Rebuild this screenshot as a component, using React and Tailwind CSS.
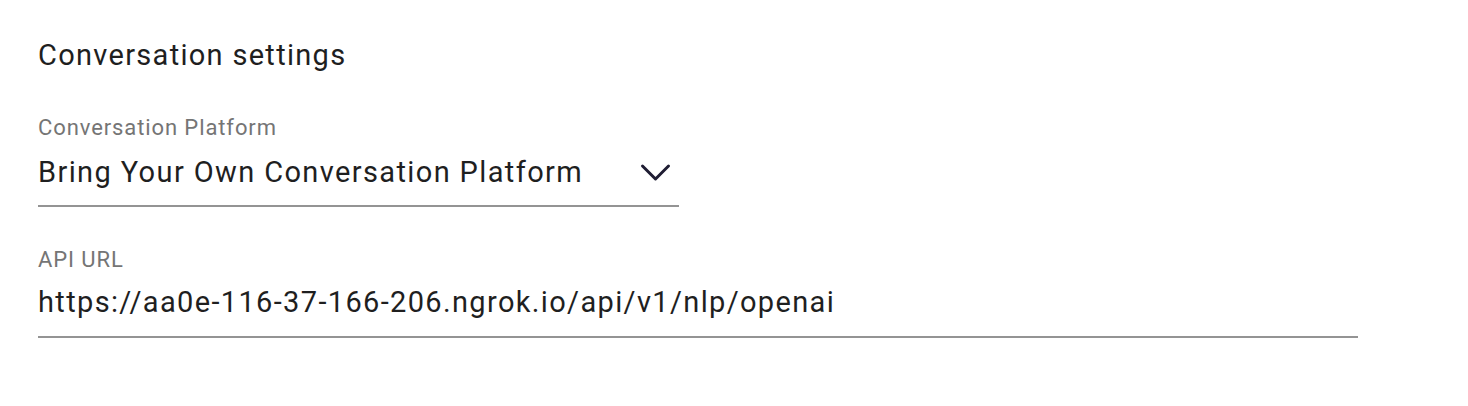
const ChevronIcon = () => (
  <svg width="31" height="19" viewBox="0 0 31 19" fill="none" className="text-[#1f1d33]">
    <path d="M2.5 3 L15.5 16 L28.5 3" stroke="currentColor" strokeWidth="3" strokeLinecap="round" strokeLinejoin="round" />
  </svg>
);

const App = () => {
  return (
    <div className="w-[1468px] h-[406px] bg-white font-['Roboto',sans-serif] pl-[38px] pt-[37px]">
      {/* Heading */}
      <h2 className="text-[29px] leading-[36px] tracking-[1.3px] text-[#1f1f1f]">Conversation settings</h2>

      {/* Platform select */}
      <div className="mt-[41px] w-[641px]">
        <label className="block text-[22px] leading-[28px] tracking-[0.9px] text-[#757575]">Conversation Platform</label>
        <div className="flex items-center justify-between pt-[12px] pb-[15px] border-b-2 border-[#949494] pr-[8px]">
          <span className="text-[29px] leading-[36px] tracking-[1.38px] text-[#1f1f1f]">Bring Your Own Conversation Platform</span>
          <ChevronIcon />
        </div>
      </div>

      {/* API URL */}
      <div className="mt-[39px] w-[1320px]">
        <label className="block text-[22px] leading-[28px] tracking-[0.9px] text-[#757575]">API URL</label>
        <div className="pt-[10px] pb-[16px] border-b-2 border-[#949494]">
          <span className="block text-[29px] leading-[36px] tracking-[1.35px] text-[#1f1f1f]">https://aa0e-116-37-166-206.ngrok.io/api/v1/nlp/openai</span>
        </div>
      </div>
    </div>
  );
};

export default App;
